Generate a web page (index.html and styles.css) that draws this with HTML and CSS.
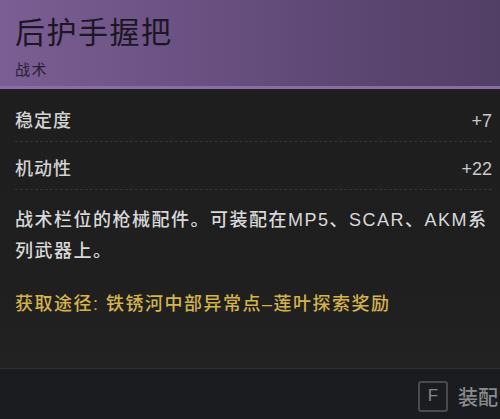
FILE: index.html
```html
<!DOCTYPE html>
<html lang="zh-CN">
<head>
<meta charset="utf-8">
<title>后护手握把</title>
<link rel="stylesheet" href="styles.css">
</head>
<body>
<div class="card">
  <header class="header">
    <h1 class="title">后护手握把</h1>
    <div class="subtitle">战术</div>
  </header>
  <section class="body">
    <div class="stats">
      <div class="stat"><span class="stat-name">稳定度</span><span class="stat-value">+7</span></div>
      <div class="stat"><span class="stat-name">机动性</span><span class="stat-value">+22</span></div>
    </div>
    <p class="desc">战术栏位的枪械配件。可装配在MP5、SCAR、AKM系列武器上。</p>
    <p class="source">获取途径: 铁锈河中部异常点–莲叶探索奖励</p>
  </section>
  <footer class="footer">
    <span class="key">F</span>
    <span class="action">装配</span>
  </footer>
</div>
</body>
</html>
```

FILE: styles.css
```css
* { box-sizing: border-box; }
html, body {
  margin: 0;
  padding: 0;
  width: 500px;
  height: 419px;
  overflow: hidden;
  background: #1e1f20;
}
.card {
  width: 500px;
  height: 419px;
  display: flex;
  flex-direction: column;
  font-family: "Liberation Sans", "Noto Sans CJK SC", sans-serif;
}
.header {
  height: 89px;
  padding: 12px 0 0 15px;
  background: linear-gradient(90deg, #7b5e93 0%, #6c5284 35%, #5c4672 70%, #523f66 100%);
  border-bottom: 3px solid #8a6ba6;
}
.title {
  margin: 0;
  font-family: "Noto Sans CJK SC", sans-serif;
  font-weight: 400;
  font-size: 30px;
  line-height: 36px;
  letter-spacing: 1.5px;
  color: #1d1624;
}
.subtitle {
  margin-top: 11px;
  font-family: "Noto Sans CJK SC", sans-serif;
  font-size: 15px;
  line-height: 20px;
  letter-spacing: 1.5px;
  color: #2a2034;
}
.body {
  flex: 1;
  padding: 5px 8px 0 15px;
  background: linear-gradient(180deg, #1e1e1f 0%, #1f1f20 70%, #222223 100%);
  font-weight: 500;
}
.stat {
  height: 48px;
  padding-top: 9px;
  display: flex;
  justify-content: space-between;
  line-height: 36px;
  border-bottom: 1px dashed #343434;
}
.stat-name {
  font-size: 18px;
  letter-spacing: 1px;
  color: #d2d2d2;
}
.stat-value {
  font-size: 18px;
  color: #cacaca;
}
.desc {
  margin: 15px 0 0;
  font-size: 18px;
  line-height: 31px;
  letter-spacing: 1.5px;
  color: #d8d8d8;
}
.source {
  margin: 22px 0 0;
  font-size: 18px;
  line-height: 31px;
  letter-spacing: 1.5px;
  color: #d4b44a;
}
.footer {
  height: 51px;
  flex-shrink: 0;
  display: flex;
  align-items: center;
  justify-content: flex-end;
  gap: 10px;
  padding: 4px 2px 0 0;
  background: #1b1c20;
  border-top: 1px solid #2f3032;
}
.key {
  width: 30px;
  height: 31px;
  display: flex;
  align-items: center;
  justify-content: center;
  border: 2px solid #4a4b4e;
  border-radius: 3px;
  font-size: 17px;
  color: #858688;
}
.action {
  font-family: "Noto Sans CJK SC", sans-serif;
  font-weight: 500;
  font-size: 20px;
  color: #8a8b8d;
}
```
